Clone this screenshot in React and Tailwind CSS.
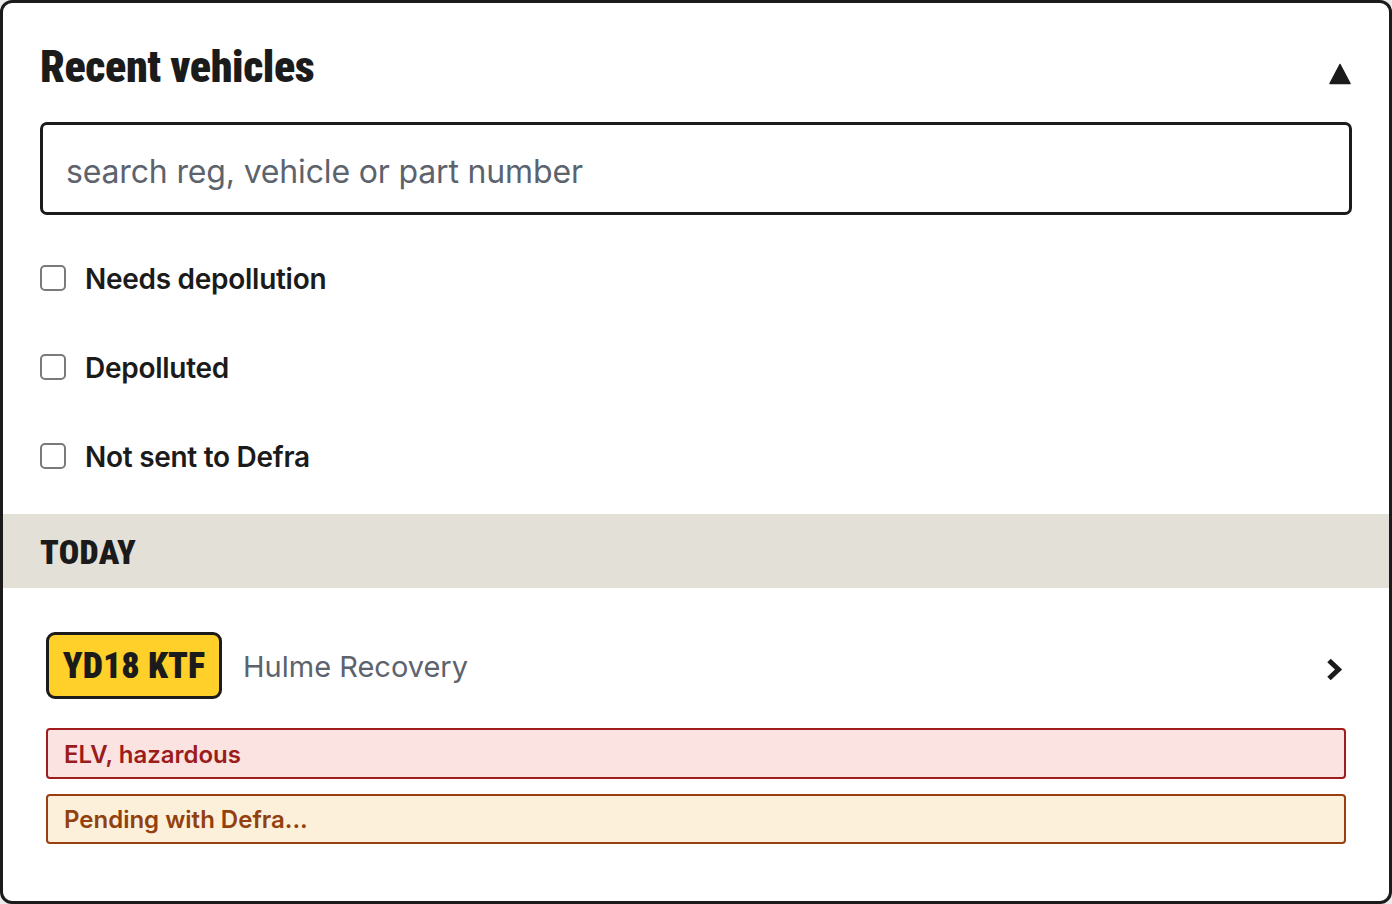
import React from "react";

const cond = { fontFamily: '"Roboto Condensed", "DejaVu Sans Condensed", Roboto, sans-serif', fontStretch: "condensed" };

function Check({ label }) {
  return (
    <label className="flex items-center h-[89px] gap-[19px]">
      <span className="w-[26px] h-[26px] rounded-[5px] border-2 border-[#7a7a7a] bg-white shrink-0" />
      <span className="pt-[3px] text-[28px] font-semibold text-[#1b1b1b] tracking-[-0.01em]">{label}</span>
    </label>
  );
}

function Tag({ children, cls, h }) {
  return (
    <div className={h + " border-2 rounded-[4px] flex items-center pl-[16px] pt-[2px] text-[24px] font-semibold " + cls}>
      {children}
    </div>
  );
}

export default function App() {
  return (
    <div className="w-[1392px] h-[904px] bg-[#ececec]" style={{ fontFamily: 'Inter, "Noto Sans", sans-serif' }}>
      <div className="w-full h-full border-[3px] border-[#1b1b1b] rounded-[12px] bg-white overflow-hidden flex flex-col">
        <div className="h-[119px] flex justify-between items-start pl-[37px] pr-[37px]">
          <h1 className="pt-[42px] text-[44px] leading-none font-black text-[#1b1b1b] tracking-[-0.01em]" style={cond}>Recent vehicles</h1>
          <svg className="mt-[60px] mr-[1px]" width="22" height="22" viewBox="0 0 22 22">
            <path d="M11 1.5 L21 20.5 L1 20.5 Z" fill="#1b1b1b" stroke="#1b1b1b" strokeWidth="1.5" strokeLinejoin="round" />
          </svg>
        </div>
        <div className="px-[37px]">
          <div className="h-[93px] border-[3px] border-[#1b1b1b] rounded-[7px] flex items-center pl-[23px] pt-[6px]">
            <span className="text-[32px] text-[#5c636d] tracking-[-0.005em]">search reg, vehicle or part number</span>
          </div>
        </div>
        <div className="px-[37px] pt-[18px] flex flex-col">
          <Check label="Needs depollution" />
          <Check label="Depolluted" />
          <Check label="Not sent to Defra" />
        </div>
        <div className="mt-[14px] h-[74px] bg-[#e3e0d8] flex items-center pl-[37px]">
          <span className="pt-[2px] text-[34px] font-black tracking-[0.01em] text-[#1b1b1b]" style={cond}>TODAY</span>
        </div>
        <div className="px-[43px] pt-[44px] flex flex-col">
          <div className="flex items-center">
            <div className="w-[176px] h-[67px] bg-[#ffd029] border-[3px] border-[#1b1b1b] rounded-[9px] flex items-center justify-center">
              <span className="pt-[1px] text-[36px] font-black text-[#1b1b1b]" style={cond}>YD18 KTF</span>
            </div>
            <span className="ml-[21px] pt-[3px] text-[29px] text-[#5c636d]">Hulme Recovery</span>
            <svg className="ml-auto mr-[3px] mt-[8px]" width="17" height="23" viewBox="0 0 17 23">
              <path d="M3 2.5 L12.5 11.5 L3 20.5" fill="none" stroke="#1b1b1b" strokeWidth="5" strokeLinejoin="miter" />
            </svg>
          </div>
          <div className="mt-[29px] flex flex-col gap-[15px]">
            <Tag h="h-[51px]" cls="bg-[#fae3e0] border-[#a11d1d] text-[#9b1c1c]">ELV, hazardous</Tag>
            <Tag h="h-[50px]" cls="bg-[#fdf0da] border-[#9a4010] text-[#92400e]">Pending with Defra...</Tag>
          </div>
        </div>
      </div>
    </div>
  );
}
